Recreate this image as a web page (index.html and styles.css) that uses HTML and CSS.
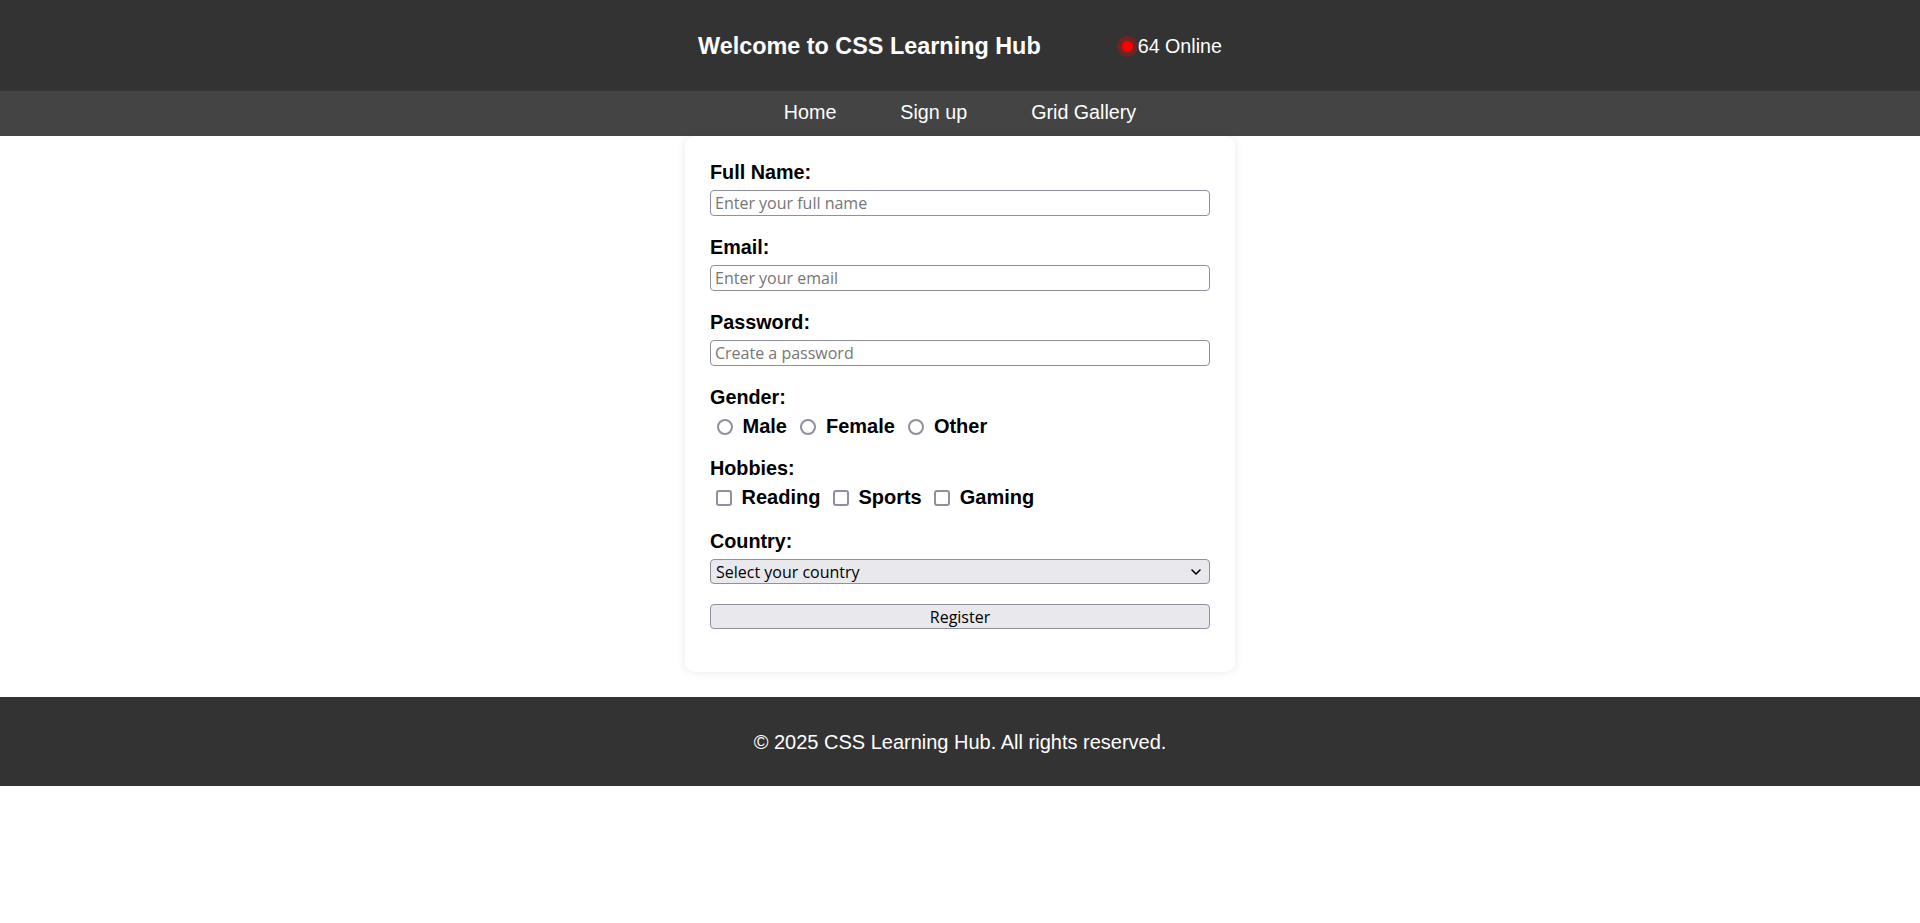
FILE: index.html
```html
<!DOCTYPE html>
<html lang="en">
<head>
<meta charset="UTF-8">
<title>CSS Learning Hub - Sign up</title>
<link rel="stylesheet" href="styles.css">
</head>
<body>
<header class="site-header">
  <h1 class="site-title">Welcome to CSS Learning Hub</h1>
  <div class="online">
    <span class="online-dot"></span>
    <span class="online-text">64 Online</span>
  </div>
</header>
<nav class="site-nav">
  <a href="#" class="nav-link">Home</a>
  <a href="#" class="nav-link">Sign up</a>
  <a href="#" class="nav-link">Grid Gallery</a>
</nav>
<main class="page">
  <form class="signup-card">
    <div class="field">
      <label class="field-label" for="fullname">Full Name:</label>
      <input class="text-input" id="fullname" type="text" placeholder="Enter your full name">
    </div>
    <div class="field">
      <label class="field-label" for="email">Email:</label>
      <input class="text-input" id="email" type="email" placeholder="Enter your email">
    </div>
    <div class="field">
      <label class="field-label" for="password">Password:</label>
      <input class="text-input" id="password" type="password" placeholder="Create a password">
    </div>
    <div class="field">
      <span class="field-label">Gender:</span>
      <div class="options">
        <label class="option"><input class="radio" type="radio" name="gender" value="male">Male</label>
        <label class="option"><input class="radio" type="radio" name="gender" value="female">Female</label>
        <label class="option"><input class="radio" type="radio" name="gender" value="other">Other</label>
      </div>
    </div>
    <div class="field field-hobbies">
      <span class="field-label">Hobbies:</span>
      <div class="options">
        <label class="option"><input class="checkbox" type="checkbox" value="reading">Reading</label>
        <label class="option"><input class="checkbox" type="checkbox" value="sports">Sports</label>
        <label class="option"><input class="checkbox" type="checkbox" value="gaming">Gaming</label>
      </div>
    </div>
    <div class="field field-country">
      <label class="field-label" for="country">Country:</label>
      <div class="select-wrap">
        <select class="select" id="country">
          <option>Select your country</option>
          <option>India</option>
          <option>USA</option>
          <option>UK</option>
        </select>
        <svg class="select-arrow" width="10" height="6" viewBox="0 0 10 6"><polyline points="1,1 5,5 9,1" fill="none" stroke="#000" stroke-width="1.6" stroke-linecap="round" stroke-linejoin="round"/></svg>
      </div>
    </div>
    <button class="submit-btn" type="button">Register</button>
  </form>
</main>
<footer class="site-footer">© 2025 CSS Learning Hub. All rights reserved.</footer>
</body>
</html>
```
FILE: styles.css
```css
* {
  box-sizing: border-box;
}

body {
  margin: 0;
  font-family: "Liberation Sans", Arial, sans-serif;
  background: #fff;
  color: #000;
}

.site-header {
  height: 91px;
  background: #333;
  color: #fff;
  display: flex;
  align-items: center;
  justify-content: center;
  padding-top: 2px;
}

.site-title {
  margin: 0 81px 0 0;
  font-size: 23.4px;
  font-weight: bold;
  line-height: 1;
}

.online {
  display: flex;
  align-items: center;
}

.online-dot {
  width: 11px;
  height: 11px;
  border-radius: 50%;
  background: #f00;
  box-shadow: 0 0 1px 5px rgba(255, 0, 0, 0.3);
  margin-right: 5px;
}

.online-text {
  font-size: 19.7px;
}

.site-nav {
  height: 45px;
  background: #444;
  display: flex;
  align-items: center;
  justify-content: center;
  gap: 64px;
  padding-bottom: 2px;
}

.nav-link {
  color: #fff;
  text-decoration: none;
  font-size: 19.7px;
}

.page {
  padding-bottom: 25px;
}

.signup-card {
  width: 550px;
  margin: 0 auto;
  background: #fff;
  border-radius: 10px;
  box-shadow: 0 0 10px rgba(0, 0, 0, 0.1);
  padding: 26px 25px 43px;
}

.field {
  display: flex;
  flex-direction: column;
  align-items: flex-start;
  margin-bottom: 21px;
}

.field-hobbies {
  margin-bottom: 23px;
}

.field-country {
  margin-bottom: 20px;
}

.field-label {
  font-weight: bold;
  font-size: 19.8px;
  line-height: 21px;
  margin-bottom: 7px;
}

.text-input {
  width: 500px;
  height: 26px;
  margin: 0;
  border: 1px solid #8f8f9d;
  border-radius: 4px;
  padding: 0 4px;
  font-family: "Open Sans", sans-serif;
  font-size: 16px;
  color: #000;
  background: #fff;
}

.text-input::placeholder {
  color: #767676;
  opacity: 1;
}

.options {
  display: flex;
  align-items: center;
  gap: 6.5px;
  margin-top: 1px;
}

.option {
  display: flex;
  align-items: center;
  font-size: 20px;
  font-weight: bold;
  line-height: 21px;
}

.radio,
.checkbox {
  appearance: none;
  -webkit-appearance: none;
  width: 16px;
  height: 16px;
  margin: 0 9.5px 0 7px;
  border: 2px solid #8f8f9d;
  background: #fff;
}

.radio {
  border-radius: 50%;
}

.checkbox {
  border-radius: 3px;
  margin-left: 6px;
}

.select-wrap {
  position: relative;
  width: 500px;
}

.select {
  appearance: none;
  -webkit-appearance: none;
  display: block;
  width: 100%;
  height: 25px;
  margin: 0;
  background: #e9e9ed;
  border: 1px solid #8f8f9d;
  border-radius: 4px;
  padding: 0 24px 0 5px;
  font-family: "Open Sans", sans-serif;
  font-size: 16px;
  color: #000;
}

.select-arrow {
  position: absolute;
  right: 9px;
  top: 10px;
  pointer-events: none;
}

.submit-btn {
  display: block;
  width: 500px;
  height: 25px;
  margin: 0;
  padding: 0;
  background: #e9e9ed;
  border: 1px solid #8f8f9d;
  border-radius: 4px;
  font-family: "Open Sans", sans-serif;
  font-size: 16px;
  color: #000;
}

.site-footer {
  height: 89px;
  background: #333;
  color: #fff;
  display: flex;
  align-items: center;
  justify-content: center;
  padding-top: 1px;
  font-size: 20px;
}
```
